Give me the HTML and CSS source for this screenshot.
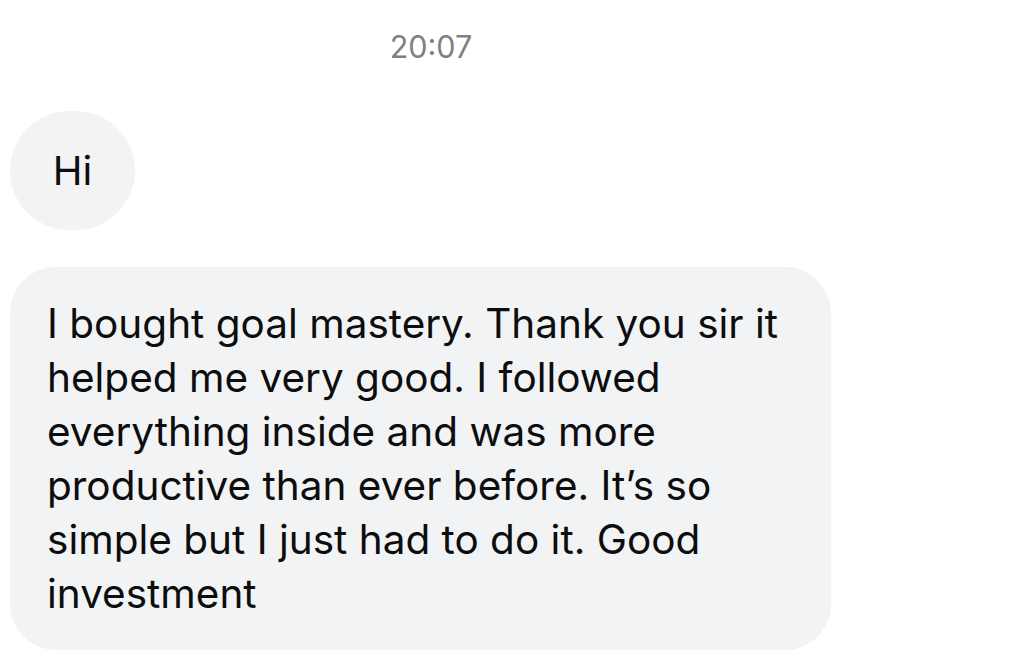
FILE: index.html
```html
<!DOCTYPE html>
<html lang="en">
<head>
<meta charset="utf-8">
<link rel="stylesheet" href="styles.css">
<title>Chat</title>
</head>
<body>
<div class="thread">
  <div class="time">20:07</div>
  <div class="bubble hi">Hi</div>
  <div class="bubble long">I bought goal mastery. Thank you sir it helped me very good. I followed everything inside and was more productive than ever before. It’s so simple but I just had to do it. Good investment</div>
</div>
</body>
</html>
```

FILE: styles.css
```css
html, body {
  margin: 0;
  padding: 0;
  background: #ffffff;
}
body {
  font-family: Inter, "Liberation Sans", sans-serif;
  color: #0d0d0d;
}
.thread {
  display: flex;
  flex-direction: column;
  align-items: flex-start;
  padding: 0 10px;
}
.time {
  width: 842px;
  text-align: center;
  font-size: 30.5px;
  line-height: 34px;
  color: #7f7f84;
  margin-top: 30px;
}
.bubble {
  background: #f2f3f5;
  box-sizing: border-box;
}
.hi {
  margin-top: 47px;
  width: 125px;
  height: 119px;
  border-radius: 60px;
  display: flex;
  align-items: center;
  justify-content: center;
  font-size: 40px;
}
.long {
  margin-top: 37px;
  width: 821px;
  height: 383px;
  border-radius: 46px;
  padding: 30px 37px 0 37px;
  font-size: 40.5px;
  line-height: 54px;
}
```
